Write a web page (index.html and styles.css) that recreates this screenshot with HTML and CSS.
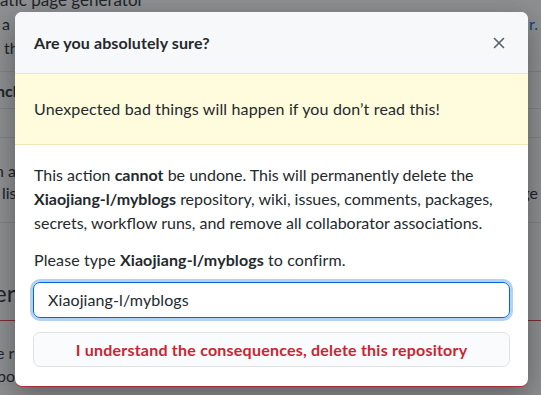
FILE: index.html
```html
<!DOCTYPE html>
<html lang="en">
<head>
<meta charset="utf-8">
<title>Delete repository</title>
<link rel="stylesheet" href="styles.css">
</head>
<body>
<div class="page">
  <div class="bg">
    <div class="row row-a"><span>atic page generator</span></div>
    <div class="row row-b"><span class="l">a</span><span class="r link">r.</span></div>
    <div class="row row-c"><span class="l">th</span></div>
    <div class="rule rule-1"></div>
    <div class="row row-d"><span class="l bold">ncl</span></div>
    <div class="rule rule-2"></div>
    <div class="rule rule-3"></div>
    <div class="row row-e"><span class="l">n a</span></div>
    <div class="row row-f"><span class="l">lis</span><span class="r">ge</span></div>
    <div class="rule rule-4"></div>
    <div class="row row-g"><span class="l">er</span></div>
    <div class="rule danger"></div>
    <div class="row row-h"><span class="l">e r</span></div>
    <div class="row row-i"><span class="l">po</span></div>
  </div>
  <div class="backdrop"></div>
  <div class="dialog" role="dialog">
    <div class="dialog-header">
      <h3 class="dialog-title">Are you absolutely sure?</h3>
      <button class="close" aria-label="Close">
        <svg width="12" height="12" viewBox="0 0 12 12"><path d="M1.5 1.5 L10.5 10.5 M10.5 1.5 L1.5 10.5" stroke="#586069" stroke-width="1.6" stroke-linecap="round" fill="none"/></svg>
      </button>
    </div>
    <div class="flash">Unexpected bad things will happen if you don’t read this!</div>
    <div class="dialog-body">
      <p class="para">This action <strong>cannot</strong> be undone. This will permanently delete the <strong>Xiaojiang-l/myblogs</strong> repository, wiki, issues, comments, packages, secrets, workflow runs, and remove all collaborator associations.</p>
      <p class="para confirm">Please type <strong>Xiaojiang-l/myblogs</strong> to confirm.</p>
      <div class="input">Xiaojiang-l/myblogs</div>
      <button class="danger-btn">I understand the consequences, delete this repository</button>
    </div>
  </div>
</div>
</body>
</html>
```

FILE: styles.css
```css
* { box-sizing: border-box; }
html, body { margin: 0; padding: 0; }
body {
  width: 541px;
  height: 395px;
  overflow: hidden;
  font-family: Lato, "Liberation Sans", sans-serif;
  font-size: 16px;
  color: #24292e;
  background: #fff;
}
.page {
  position: relative;
  width: 541px;
  height: 395px;
  overflow: hidden;
}
.bg {
  display: flex;
  flex-direction: column;
  line-height: 24px;
}
.row {
  display: flex;
  justify-content: space-between;
  height: 24px;
  white-space: nowrap;
}
.row .r { margin-right: 3px; }
.link { color: #0366d6; }
.bold { font-weight: 700; }
.row-a { margin-top: -12px; font-size: 17px; }
.row-b .l { margin-left: 2px; }
.row-c .l { margin-left: 4px; }
.rule { border-top: 1px solid #e1e4e8; height: 0; }
.rule-1 { margin-top: 11px; }
.row-d { margin-top: 7px; }
.row-d .l { margin-left: -4px; }
.rule-2 { margin-top: 5px; }
.rule-3 { margin-top: 28px; }
.row-e { margin-top: 21px; }
.row-e .l { margin-left: -5px; }
.row-f { margin-top: -2px; }
.row-f .l { margin-left: 2px; }
.rule-4 { margin-top: 17px; }
.row-g { margin-top: 52px; height: 36px; line-height: 36px; font-size: 24px; }
.row-g .l { margin-left: -6px; }
.danger { border-top-color: #d73a49; margin-top: 9px; }
.row-h { margin-top: 20px; }
.row-h .l { margin-left: -4px; }
.row-i { margin-top: -1px; }
.row-i .l { margin-left: -3px; }

.backdrop {
  position: absolute;
  inset: 0;
  background: rgba(27, 31, 35, 0.5);
}
.dialog {
  position: absolute;
  left: 15px;
  top: 12px;
  width: 513px;
  height: 374px;
  background: #fff;
  border-radius: 7px;
  overflow: hidden;
  box-shadow: 0 9px 28px rgba(0, 0, 0, 0.35), 0 1px 0 #d73a49;
}
.dialog-header {
  display: flex;
  align-items: center;
  justify-content: space-between;
  height: 61px;
  padding: 0 17px 0 19px;
  background: #f6f8fa;
}
.dialog-title {
  margin: 0;
  font-size: 16px;
  font-weight: 700;
  line-height: 24px;
  letter-spacing: 0.1px;
}
.close {
  display: flex;
  align-items: center;
  justify-content: center;
  width: 24px;
  height: 24px;
  padding: 0;
  border: 0;
  background: transparent;
}
.flash {
  height: 72px;
  display: flex;
  align-items: center;
  padding: 0 19px;
  background: #fffbdd;
  border-top: 1px solid #f1e6b6;
  border-bottom: 1px solid #f1e6b6;
  line-height: 24px;
  letter-spacing: 0.15px;
}
.dialog-body {
  display: flex;
  flex-direction: column;
  padding: 18px 18px 18px 18px;
}
.para {
  margin: 0 0 13px 1px;
  line-height: 24px;
}
.confirm { margin-bottom: 10px; letter-spacing: 0.1px; }
.input {
  height: 36px;
  display: flex;
  align-items: center;
  padding: 0 14px;
  border: 1px solid #0366d6;
  border-radius: 7px;
  box-shadow: 0 0 0 3px rgba(3, 102, 214, 0.3);
  line-height: 24px;
  letter-spacing: 0.1px;
}
.danger-btn {
  margin-top: 14px;
  height: 35px;
  width: 100%;
  border: 1px solid #dfe2e5;
  border-radius: 7px;
  background: #fafbfc;
  color: #cb2431;
  font-family: inherit;
  font-size: 16px;
  font-weight: 700;
  letter-spacing: 0.22px;
  padding: 0;
}
```
